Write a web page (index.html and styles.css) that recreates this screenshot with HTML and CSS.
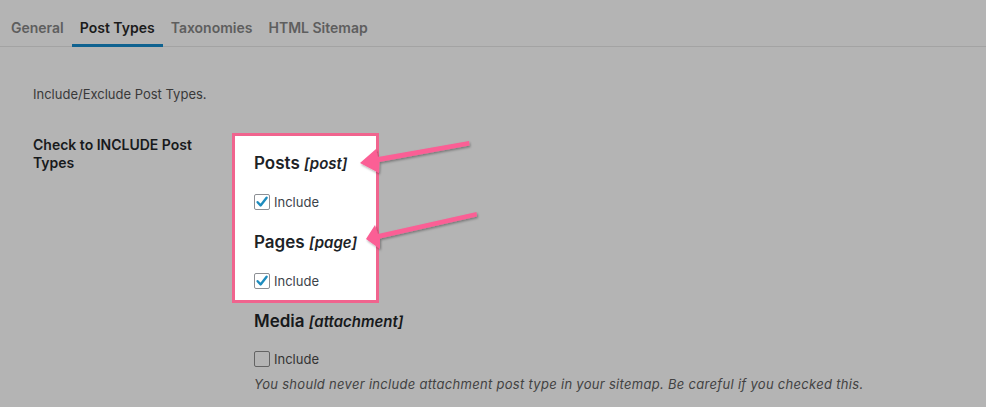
FILE: index.html
```html
<!DOCTYPE html>
<html>

<head>
  <meta charset="UTF-8">
  <title>Sitemap Settings - Post Types</title>
  <link rel="stylesheet" href="styles.css">
</head>

<body>
  <nav class="tabs">
    <a class="tab">General</a>
    <a class="tab active">Post Types</a>
    <a class="tab">Taxonomies</a>
    <a class="tab">HTML Sitemap</a>
  </nav>

  <p class="intro">Include/Exclude Post Types.</p>

  <div class="form-row">
    <div class="label">Check to INCLUDE Post Types</div>
    <div class="field">
      <div class="highlight">
        <h3 class="type-title">Posts <em>[post]</em></h3>
        <label class="check"><span class="box checked"><svg viewBox="0 0 16 16" width="16" height="16"><path d="M3.6 8.2 L6.6 11.4 L12.6 3.8" fill="none" stroke="#1e8cbe" stroke-width="2.4" stroke-linecap="round" stroke-linejoin="round"/></svg></span>Include</label>
        <h3 class="type-title">Pages <em>[page]</em></h3>
        <label class="check"><span class="box checked"><svg viewBox="0 0 16 16" width="16" height="16"><path d="M3.6 8.2 L6.6 11.4 L12.6 3.8" fill="none" stroke="#1e8cbe" stroke-width="2.4" stroke-linecap="round" stroke-linejoin="round"/></svg></span>Include</label>
      </div>
      <h3 class="type-title media">Media <em>[attachment]</em></h3>
      <label class="check"><span class="box"></span>Include</label>
      <p class="note">You should never include attachment post type in your sitemap. Be careful if you checked this.</p>
    </div>
  </div>

  <svg class="arrows" width="986" height="407" viewBox="0 0 986 407">
    <defs>
      <filter id="shadow" x="-10%" y="-30%" width="120%" height="160%">
        <feDropShadow dx="1" dy="1.5" stdDeviation="1" flood-color="#000" flood-opacity="0.35"/>
      </filter>
    </defs>
    <g fill="#fb5f95" filter="url(#shadow)">
      <polygon points="360,163 376,149 378,157 469,141 469.5,145.5 379.5,162 379,173"/>
      <polygon points="366,239 375,225 378,234 476.5,212 477,216.5 380,238.5 380,249"/>
    </g>
  </svg>
</body>

</html>
```

FILE: styles.css
```css
body {
  margin: 0;
  background-color: #b4b4b4;
  color: #181a1c;
  font-family: Inter, "Noto Sans", sans-serif;
  position: relative;
  height: 407px;
  overflow: hidden;
}

.tabs {
  display: flex;
  padding: 0 0 0 3px;
  height: 46px;
  border-bottom: 1px solid #a3a3a3;
}

.tab {
  display: flex;
  align-items: center;
  padding: 10px 8px 0;
  font-size: 14px;
  font-weight: 600;
  color: #5e5e5e;
  border-bottom: 3px solid transparent;
  margin-bottom: -1px;
}

.tab.active {
  color: #1b1b1b;
  border-bottom-color: #0f6290;
}

.intro {
  margin: 38px 0 0 33px;
  font-size: 13px;
  line-height: 18px;
  color: #393939;
}

.form-row {
  display: grid;
  grid-template-columns: 221px 1fr;
  padding-left: 33px;
  margin-top: 30px;
}

.label {
  font-size: 14px;
  font-weight: 600;
  line-height: 18px;
  width: 170px;
  padding-top: 3px;
}

.highlight {
  margin-left: -22px;
  width: 122px;
  padding: 16px 0 9px 19px;
  background-color: #ffffff;
  border: 3px solid #f0648e;
}

.type-title {
  margin: 0;
  font-size: 17px;
  line-height: 22px;
  font-weight: 600;
  color: #1d2327;
  white-space: nowrap;
}

.type-title em {
  font-size: 15px;
  font-weight: 600;
}

.type-title + .check {
  margin-top: 17px;
}

.check + .type-title {
  margin-top: 19px;
}

.type-title.media {
  margin-top: 7px;
  color: #17191b;
}

.check {
  display: flex;
  align-items: center;
  gap: 4px;
  height: 20px;
  font-size: 13px;
  color: #3c434a;
}

.field > .check {
  margin-top: 16px;
  color: #333333;
}

.box {
  width: 14px;
  height: 14px;
  border: 1px solid #8c8f94;
  border-radius: 2px;
  background-color: #ffffff;
  display: flex;
  align-items: center;
  justify-content: center;
}

.box svg {
  flex: none;
}

.field > .check .box {
  background-color: #b4b4b4;
  border-color: #636363;
}

.note {
  margin: 6px 0 0;
  font-size: 13px;
  line-height: 18px;
  font-style: italic;
  letter-spacing: 0.3px;
  color: #424242;
}

.arrows {
  position: absolute;
  left: 0;
  top: 0;
  pointer-events: none;
}
```
